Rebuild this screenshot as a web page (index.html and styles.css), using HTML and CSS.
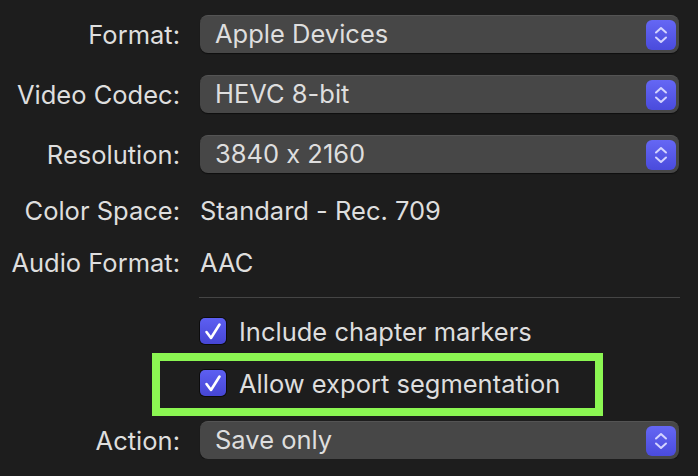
FILE: index.html
```html
<!DOCTYPE html>
<html lang="en">
<head>
    <meta charset="UTF-8">
    <title>Share - Apple Devices</title>
    <link rel="stylesheet" href="styles.css">
</head>
<body>
<form class="settings">
    <div class="row">
        <label class="label">Format:</label>
        <div class="popup">
            <span>Apple Devices</span>
            <span class="stepper">
                <svg width="14" height="18" viewBox="0 0 14 18"><path d="M2 6.5 L7 2 L12 6.5 M2 11.5 L7 16 L12 11.5" /></svg>
            </span>
        </div>
    </div>
    <div class="row row-popup">
        <label class="label">Video Codec:</label>
        <div class="popup">
            <span>HEVC 8-bit</span>
            <span class="stepper">
                <svg width="14" height="18" viewBox="0 0 14 18"><path d="M2 6.5 L7 2 L12 6.5 M2 11.5 L7 16 L12 11.5" /></svg>
            </span>
        </div>
    </div>
    <div class="row row-popup">
        <label class="label">Resolution:</label>
        <div class="popup">
            <span>3840 x 2160</span>
            <span class="stepper">
                <svg width="14" height="18" viewBox="0 0 14 18"><path d="M2 6.5 L7 2 L12 6.5 M2 11.5 L7 16 L12 11.5" /></svg>
            </span>
        </div>
    </div>
    <div class="row row-info">
        <span class="label">Color Space:</span>
        <span class="value">Standard - Rec. 709</span>
    </div>
    <div class="row row-info2">
        <span class="label">Audio Format:</span>
        <span class="value">AAC</span>
    </div>
    <div class="separator"></div>
    <div class="row row-check">
        <span></span>
        <label class="check">
            <span class="box">
                <svg width="26" height="26" viewBox="0 0 26 26"><path d="M6.5 14 L11 20 L19.5 6.5" /></svg>
            </span>
            Include chapter markers
        </label>
    </div>
    <div class="row row-check2 highlight">
        <span></span>
        <label class="check">
            <span class="box">
                <svg width="26" height="26" viewBox="0 0 26 26"><path d="M6.5 14 L11 20 L19.5 6.5" /></svg>
            </span>
            Allow export segmentation
        </label>
    </div>
    <div class="row row-action">
        <label class="label">Action:</label>
        <div class="popup">
            <span>Save only</span>
            <span class="stepper">
                <svg width="14" height="18" viewBox="0 0 14 18"><path d="M2 6.5 L7 2 L12 6.5 M2 11.5 L7 16 L12 11.5" /></svg>
            </span>
        </div>
    </div>
</form>
</body>
</html>
```

FILE: styles.css
```css
body {
  margin: 0;
  background: #1d1d1d;
  color: #dedede;
  font-family: Inter, "Noto Sans", sans-serif;
  font-size: 25.5px;
  font-feature-settings: "calt" 0;
}

.settings {
  display: flex;
  flex-direction: column;
  padding-top: 15px;
}

.row {
  display: grid;
  grid-template-columns: 180px 479px;
  column-gap: 20px;
  align-items: center;
  height: 38px;
}
.row-popup {
  margin-top: 22px;
}
.row-info {
  margin-top: 18px;
}
.row-info2 {
  margin-top: 14px;
}
.row-check {
  margin-top: 14px;
}
.row-check2 {
  margin-top: 14px;
}
.row-action {
  margin-top: 19px;
}

.label {
  text-align: right;
  white-space: nowrap;
}

.popup {
  display: flex;
  align-items: center;
  justify-content: space-between;
  height: 38px;
  box-sizing: border-box;
  padding: 0 3px 0 15px;
  background: #474747;
  border-radius: 8px;
  border-top: 1px solid #545454;
  box-shadow: 0 1px 1px rgba(0, 0, 0, 0.5);
}
.popup span:first-child {
  padding-bottom: 3px;
}

.stepper {
  display: flex;
  align-items: center;
  justify-content: center;
  width: 30px;
  height: 30px;
  border-radius: 6px;
  background: linear-gradient(#6567f4, #4a4bdc);
}
.stepper path {
  fill: none;
  stroke: #d4d4ff;
  stroke-width: 2;
  stroke-linecap: round;
  stroke-linejoin: round;
}

.separator {
  margin: 16px 18px 0 199px;
  height: 1px;
  background: #454545;
}

.check {
  display: flex;
  align-items: center;
  gap: 13px;
  white-space: nowrap;
}
.box {
  display: flex;
  width: 26px;
  height: 26px;
  box-sizing: border-box;
  border-radius: 5px;
  background: linear-gradient(#5d5ff2, #4646d4);
  box-shadow: 0 0 0 1px #0c0c0c;
}
.box path {
  fill: none;
  stroke: white;
  stroke-width: 2.6;
  stroke-linecap: round;
  stroke-linejoin: round;
}

.highlight {
  position: relative;
}
.highlight::after {
  content: "";
  position: absolute;
  left: 152px;
  top: -11px;
  width: 451px;
  height: 63px;
  box-sizing: border-box;
  border: 8px solid #8bf652;
}
```
